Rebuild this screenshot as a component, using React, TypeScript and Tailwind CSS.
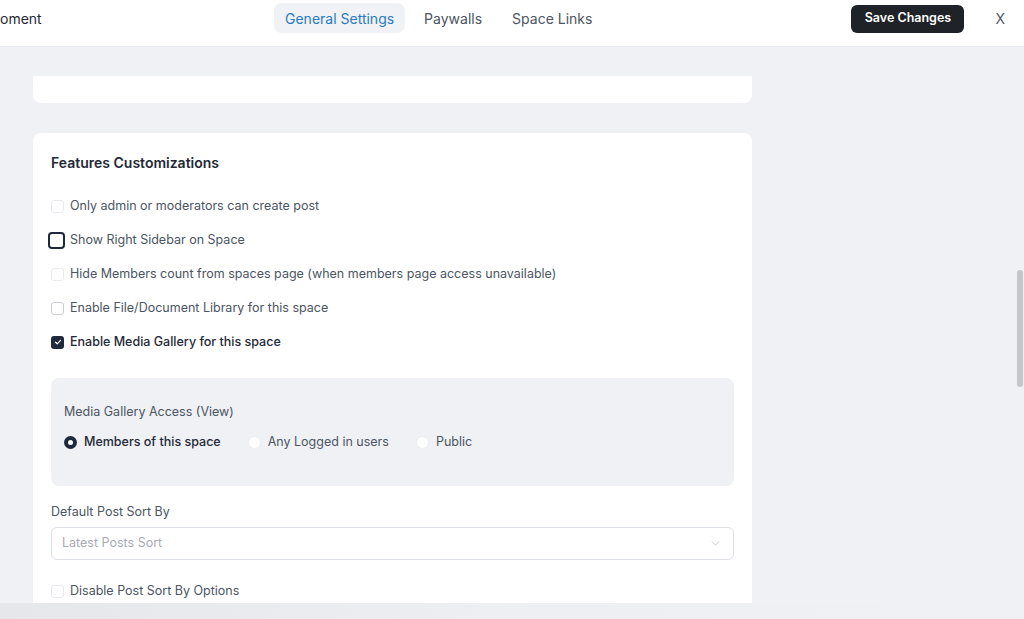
import React from 'react';
import { ChevronDown } from 'lucide-react';

type Box = 'faint' | 'focus' | 'normal' | 'checked';

const CheckBox: React.FC<{ kind: Box }> = ({ kind }) => {
    if (kind === 'focus') {
        return <span className="-ml-[3px] mr-[-1px] w-[17px] h-[17px] rounded-[4px] border-2 border-[#1e293b] bg-white shrink-0" />;
    }
    if (kind === 'checked') {
        return (
            <span className="w-[13px] h-[13px] rounded-[3px] bg-[#1e293b] flex items-center justify-center shrink-0">
                <svg width="8" height="8" viewBox="0 0 8 8" fill="none">
                    <path d="M1.5 4.2 3.2 5.8 6.5 2.3" stroke="white" strokeWidth="1.2" strokeLinecap="round" strokeLinejoin="round" />
                </svg>
            </span>
        );
    }
    return (
        <span className={`w-[13px] h-[13px] rounded-[3px] border bg-white shrink-0 ${kind === 'faint' ? 'border-[#e8eaee]' : 'border-[#c9cdd4]'}`} />
    );
};

const options: { label: string; kind: Box }[] = [
    { label: 'Only admin or moderators can create post', kind: 'faint' },
    { label: 'Show Right Sidebar on Space', kind: 'focus' },
    { label: 'Hide Members count from spaces page (when members page access unavailable)', kind: 'faint' },
    { label: 'Enable File/Document Library for this space', kind: 'normal' },
    { label: 'Enable Media Gallery for this space', kind: 'checked' },
];

const Radio: React.FC<{ label: string; selected?: boolean }> = ({ label, selected }) => (
    <label className="flex items-center mr-[27px]">
        {selected ? (
            <span className="w-[13px] h-[13px] rounded-full bg-[#1e293b] flex items-center justify-center">
                <span className="w-[5px] h-[5px] rounded-full bg-white" />
            </span>
        ) : (
            <span className="w-[13px] h-[13px] rounded-full bg-white border border-[#eceef1]" />
        )}
        <span className={`ml-[7px] text-[12.5px] ${selected ? 'text-[#1f2937] font-medium' : 'text-[#4b5563]'}`}>{label}</span>
    </label>
);

const App: React.FC = () => {
    return (
        <div className="relative w-[1024px] h-[619px] overflow-hidden flex flex-col bg-[#f0f1f5]" style={{ fontFamily: 'Inter, "Noto Sans", sans-serif' }}>
            <header className="h-[47px] shrink-0 bg-white border-b border-[#e9ebf0] pt-[3px] pr-[19px]">
                <div className="h-[30px] flex items-center">
                    <div className="w-[274px] text-[14px] text-[#1f2937]">oment</div>
                    <nav className="flex gap-2 text-[14px]">
                        <span className="h-[30px] px-[11px] flex items-center rounded-lg bg-[#f0f2f5] text-[#2b7bc0]">General Settings</span>
                        <span className="h-[30px] px-[11px] flex items-center text-[#4b5563]">Paywalls</span>
                        <span className="h-[30px] px-[11px] flex items-center text-[#4b5563]">Space Links</span>
                    </nav>
                    <button className="ml-auto mt-[1px] w-[113px] h-[28px] rounded-md bg-[#1f2227] text-white text-[12.5px] font-semibold">Save Changes</button>
                    <span className="ml-[31px] text-[14px] text-[#555b64]">X</span>
                </div>
            </header>

            <main className="flex-1 overflow-hidden pl-[33px] pt-[29px]">
                <div className="w-[719px] h-[27px] bg-white rounded-b-lg" />
                <section className="mt-[30px] w-[719px] h-[470px] overflow-hidden bg-white rounded-t-lg px-[18px] pt-[20px]">
                    <h2 className="text-[14px] leading-[20px] font-semibold text-[#1f2937]">Features Customizations</h2>
                    <div className="mt-[16px]">
                        {options.map(o => (
                            <div key={o.label} className="h-[34px] flex items-center">
                                <CheckBox kind={o.kind} />
                                <span className={`ml-[6px] text-[12.5px] ${o.kind === 'checked' ? 'text-[#1f2937] font-medium' : 'text-[#4b5563]'}`}>{o.label}</span>
                            </div>
                        ))}
                    </div>
                    <div className="mt-[19px] h-[108px] rounded-lg bg-[#f0f1f4] px-[13px] pt-[25px]">
                        <div className="text-[12.5px] leading-[18px] text-[#4b5563]">Media Gallery Access (View)</div>
                        <div className="mt-[10px] h-[22px] flex items-center">
                            <Radio label="Members of this space" selected />
                            <Radio label="Any Logged in users" />
                            <Radio label="Public" />
                        </div>
                    </div>
                    <div className="mt-[17px] text-[12.5px] leading-[18px] text-[#4b5563]">Default Post Sort By</div>
                    <div className="mt-[6px] h-[33px] rounded-md border border-[#dcdfe6] flex items-center justify-between pl-[10px] pr-[11px]">
                        <span className="text-[12.5px] text-[#a8abb2]">Latest Posts Sort</span>
                        <ChevronDown size={13} strokeWidth={1.5} className="text-[#b8bcc4]" />
                    </div>
                    <div className="mt-[14px] h-[34px] flex items-center">
                        <CheckBox kind="faint" />
                        <span className="ml-[6px] text-[12.5px] text-[#4b5563]">Disable Post Sort By Options</span>
                    </div>
                </section>
                <div className="-ml-[33px] h-[16px] bg-gradient-to-r from-[#e6e7eb] via-[#eeeff3] to-[#f0f1f5]" />
            </main>

            <div className="absolute right-[1px] top-[270px] w-[6px] h-[117px] rounded-full bg-[#c5c6ca]" />
        </div>
    );
};

export default App;
